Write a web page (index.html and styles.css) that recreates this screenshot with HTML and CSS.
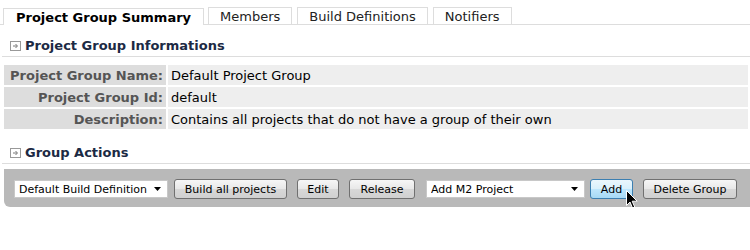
FILE: index.html
```html
<!DOCTYPE html>
<html lang="en">
<head>
    <meta charset="UTF-8">
    <title>Project Group Summary</title>
    <link rel="stylesheet" href="styles.css">
</head>
<body>
    <div class="tabs">
        <span class="tab active">Project Group Summary</span>
        <span class="tab tab-members">Members</span>
        <span class="tab tab-builds">Build Definitions</span>
        <span class="tab tab-notifiers">Notifiers</span>
    </div>

    <h3 class="section-title first">
        <svg class="toggle" width="11" height="10" viewBox="0 0 11 10">
            <rect x="0.5" y="0.5" width="10" height="9" fill="#fff" stroke="#999"/>
            <path d="M3 5h4M5.5 3l2 2-2 2" fill="none" stroke="#777"/>
        </svg>
        Project Group Informations
    </h3>

    <table class="info">
        <tr>
            <th>Project Group Name:</th>
            <td>Default Project Group</td>
        </tr>
        <tr>
            <th>Project Group Id:</th>
            <td>default</td>
        </tr>
        <tr>
            <th>Description:</th>
            <td>Contains all projects that do not have a group of their own</td>
        </tr>
    </table>

    <h3 class="section-title">
        <svg class="toggle" width="11" height="10" viewBox="0 0 11 10">
            <rect x="0.5" y="0.5" width="10" height="9" fill="#fff" stroke="#999"/>
            <path d="M3 5h4M5.5 3l2 2-2 2" fill="none" stroke="#777"/>
        </svg>
        Group Actions
    </h3>

    <div class="actions">
        <select class="build-def">
            <option>Default Build Definition</option>
        </select>
        <button class="btn btn-build">Build all projects</button>
        <button class="btn btn-edit">Edit</button>
        <button class="btn btn-release">Release</button>
        <select class="add-type">
            <option>Add M2 Project</option>
        </select>
        <span class="add-wrap">
            <button class="btn btn-add">Add</button>
            <svg class="cursor" width="12" height="19" viewBox="0 0 12 19">
                <path d="M0.5 0.5v15l3.5-3.5 2.5 6 2.2-1-2.5-5.8h5z" fill="#000" stroke="#fff" stroke-width="1"/>
            </svg>
        </span>
        <button class="btn btn-delete">Delete Group</button>
    </div>
</body>
</html>
```

FILE: styles.css
```css
body {
    margin: 0;
    font-family: "DejaVu Sans", Verdana, sans-serif;
    font-size: 13px;
    color: #000;
    background-color: #fff;
}
.tabs {
    display: flex;
    padding: 7px 0 0 3px;
    border-bottom: 1px solid #ddd;
}
.tab {
    display: block;
    height: 16px;
    line-height: 17px;
    padding: 0 11px;
    border: 1px solid #ddd;
    border-bottom: none;
    color: #222;
    font-size: 13px;
    white-space: nowrap;
}
.tab.active {
    padding: 0 12px;
    font-weight: bold;
    background-color: #fff;
    position: relative;
    top: 1px;
    color: #000;
}
.tab-members {
    margin-left: 4px;
}
.tab-builds {
    margin-left: 5px;
}
.tab-notifiers {
    margin-left: 5px;
}
.section-title {
    display: flex;
    align-items: center;
    margin: 0 0 0 2px;
    padding: 13px 0 3px 8px;
    border-bottom: 1px solid #ddd;
    font-size: 13px;
    font-weight: bold;
    color: #1c2a44;
}
.toggle {
    margin-right: 4px;
}
.info {
    width: calc(100% - 2px);
    margin: 6px 0 0 2px;
    border-spacing: 2px;
}
.info th,
.info td {
    height: 20px;
    padding: 0 3px;
    font-size: 13px;
}
.info th {
    width: 156px;
    text-align: right;
    background-color: #ddd;
    color: #555;
    white-space: nowrap;
}
.info td {
    background-color: #eee;
}
.info + .section-title {
    padding-top: 14px;
}
.actions {
    display: flex;
    align-items: center;
    margin: 5px 0 0 4px;
    padding: 10px 10px 8px 10px;
    background-color: #b9b9b9;
    border-radius: 0 0 0 6px;
}
select {
    appearance: none;
    -webkit-appearance: none;
    height: 18px;
    padding: 0 0 0 4px;
    border: 1px solid #c8c8c8;
    border-radius: 0;
    background: #fff url("data:image/svg+xml,%3Csvg xmlns='http://www.w3.org/2000/svg' width='7' height='4'%3E%3Cpath d='M0 0h7L3.5 4z' fill='%23000'/%3E%3C/svg%3E") no-repeat right 6px center;
    font-family: "DejaVu Sans", Verdana, sans-serif;
    font-size: 11px;
    color: #000;
}
.build-def {
    width: 154px;
}
.add-type {
    width: 159px;
    margin-left: 11px;
}
.btn {
    height: 20px;
    padding: 0;
    border: 1px solid #707070;
    border-radius: 3px;
    background: linear-gradient(#f6f6f6, #e8e8e8 50%, #d8d8d8 51%, #d0d0d0);
    font-family: "DejaVu Sans", Verdana, sans-serif;
    font-size: 11px;
    color: #000;
    white-space: nowrap;
}
.btn-build {
    width: 113px;
    margin-left: 6px;
}
.btn-edit {
    width: 42px;
    margin-left: 10px;
}
.btn-release {
    width: 66px;
    margin-left: 10px;
}
.add-wrap {
    position: relative;
    margin-left: 5px;
}
.btn-add {
    display: block;
    width: 43px;
    border-color: #3c7fb1;
    background: linear-gradient(#eaf6fd, #d9f0fc 50%, #bee6fd 51%, #a7d9f5);
}
.cursor {
    position: absolute;
    left: 36px;
    top: 11px;
}
.btn-delete {
    width: 94px;
    margin-left: 10px;
}
```
